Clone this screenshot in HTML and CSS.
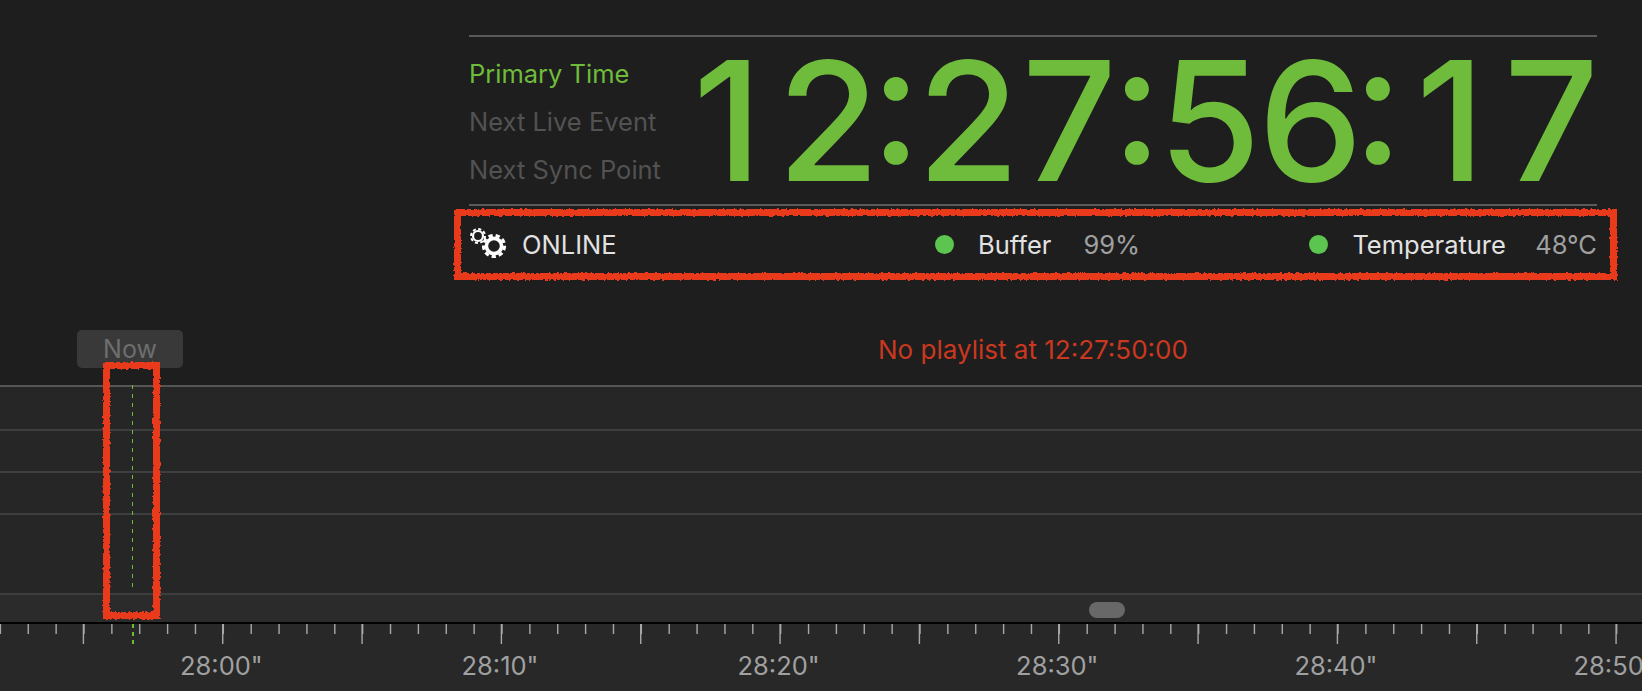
FILE: index.html
```html
<!DOCTYPE html>
<html lang="en">
<head>
<meta charset="utf-8">
<title>Timecode</title>
<link rel="stylesheet" href="styles.css">
</head>
<body>
<svg class="defs" width="0" height="0" aria-hidden="true">
  <filter id="rough" x="-5%" y="-5%" width="110%" height="110%">
    <feTurbulence type="fractalNoise" baseFrequency="0.35" numOctaves="2" seed="4"/>
    <feDisplacementMap in="SourceGraphic" scale="3.5"/>
  </filter>
</svg>
<main class="app">
  <section class="clock">
    <div class="clock-main">
      <ul class="modes">
        <li class="mode mode-active">Primary Time</li>
        <li class="mode">Next Live Event</li>
        <li class="mode">Next Sync Point</li>
      </ul>
      <div class="time"><span class="d">1</span><span class="d">2</span><span class="c">:</span><span class="d">2</span><span class="d">7</span><span class="c">:</span><span class="d">5</span><span class="d">6</span><span class="c">:</span><span class="d">1</span><span class="d">7</span></div>
    </div>
    <div class="status">
      <svg class="gears" width="38" height="38" viewBox="0 0 38 38">
        <circle cx="9" cy="10" r="5" fill="none" stroke="#fff" stroke-width="2.2"/>
        <circle cx="9" cy="10" r="7" fill="none" stroke="#fff" stroke-width="2" stroke-dasharray="3.1 2.4"/>
        <circle cx="25" cy="20" r="10" fill="#1e1e1e"/>
        <circle cx="25" cy="20" r="7.6" fill="none" stroke="#fff" stroke-width="3.6"/>
        <circle cx="25" cy="20" r="10.6" fill="none" stroke="#fff" stroke-width="3" stroke-dasharray="4.3 3.03"/>
      </svg>
      <span class="online">ONLINE</span>
      <span class="dot"></span>
      <span class="stat-name">Buffer</span>
      <span class="stat-value stat-buffer">99%</span>
      <span class="dot"></span>
      <span class="stat-name">Temperature</span>
      <span class="stat-value stat-temp">48°C</span>
    </div>
  </section>
  <div class="nowbar">
    <button class="now" type="button">Now</button>
    <p class="message">No playlist at 12:27:50:00</p>
  </div>
  <section class="timeline">
    <div class="tracks">
      <div class="track track-a"></div>
      <div class="track track-b"></div>
      <div class="track track-b"></div>
      <div class="track track-c"></div>
      <div class="track track-d"><span class="scroll-pill"></span></div>
    </div>
    <div class="ruler">
      <svg class="ticks" width="1642" height="20" viewBox="0 0 1642 20">
        <line class="tick-minor" x1="-0.3" y1="5" x2="1642" y2="5"/>
        <line class="tick-major" x1="82.7" y1="10" x2="1642" y2="10"/>
      </svg>
      <div class="labels">
        <span class="label">28:00"</span>
        <span class="label">28:10"</span>
        <span class="label">28:20"</span>
        <span class="label">28:30"</span>
        <span class="label">28:40"</span>
        <span class="label">28:50"</span>
      </div>
    </div>
    <span class="playhead"></span>
    <span class="playhead-ruler"></span>
  </section>
</main>
<div class="mark mark-status"></div>
<div class="mark mark-playhead"></div>
</body>
</html>
```

FILE: styles.css
```css
* { box-sizing: border-box; }
html, body { margin: 0; height: 100%; }
body {
  position: relative;
  width: 1642px;
  height: 691px;
  overflow: hidden;
  background: #1e1e1e;
  font-family: Inter, "Liberation Sans", sans-serif;
  font-feature-settings: "case";
}
.defs { position: absolute; }
.app { display: flex; flex-direction: column; height: 691px; }

.clock { margin: 35px 45px 0 469px; border-top: 2px solid #5a5a5a; }
.clock-main {
  display: flex;
  justify-content: space-between;
  align-items: flex-start;
  height: 169px;
  border-bottom: 2px solid #5a5a5a;
}
.modes {
  flex: none;
  list-style: none;
  margin: 0;
  padding: 22px 0 0 0;
  display: flex;
  flex-direction: column;
  gap: 19px;
}
.mode { font-size: 25.5px; line-height: 29px; color: #525252; white-space: nowrap; }
.mode-active { color: #6fbb3b; }
.time {
  flex: none;
  display: flex;
  margin-right: 1px;
  font-size: 166px;
  font-weight: 500;
  line-height: 168px;
  color: #6fbb3b;
}
.d, .c { flex: none; text-align: center; }
.d { width: 101px; letter-spacing: -12px; }
.c { width: 39px; letter-spacing: -20px; margin: 0 6.5px 0 -6.5px; }

.status {
  display: flex;
  align-items: center;
  height: 73px;
  padding-top: 4px;
  font-size: 25.5px;
  color: #e2e2e2;
}
.gears { flex: none; margin-right: 15px; }
.online { width: 413px; }
.dot { flex: none; width: 19px; height: 19px; border-radius: 50%; background: #5cc54f; margin-right: 24px; }
.stat-name { color: #e2e2e2; }
.stat-value { color: #a0a0a0; margin-left: 32px; }
.stat-buffer { width: 226px; }
.stat-temp { margin-left: auto; }

.nowbar {
  display: flex;
  align-items: center;
  height: 38px;
  margin-top: 51px;
  padding-left: 77px;
}
.now {
  width: 106px;
  height: 38px;
  padding: 0;
  border: 0;
  border-radius: 5px;
  background: #393939;
  color: #6e6e6e;
  font: 25px Inter, "Liberation Sans", sans-serif;
}
.message { margin: 0 0 0 695px; font-size: 26px; color: #c9381f; white-space: nowrap; }

.timeline { position: relative; flex: 1; margin-top: 17px; background: #282828; }
.tracks { height: 239px; display: flex; flex-direction: column; border-bottom: 2px solid #000; }
.track { border-top: 2px solid #3e3e3e; }
.track-a { height: 44px; border-top-color: #555; background: #262626; }
.track-b { height: 42px; background: #262626; }
.track-c { height: 80px; background: #262626; }
.track-d { position: relative; flex: 1; background: #2b2b2b; }
.scroll-pill {
  position: absolute;
  left: 1089px;
  top: 7px;
  width: 36px;
  height: 16px;
  border-radius: 8px;
  background: #686868;
}

.ruler { position: relative; height: 66px; }
.ticks { display: block; position: absolute; left: 0; top: 0; }
.tick-minor { stroke: #a8a8a8; stroke-width: 10; stroke-dasharray: 1.4 26.467; }
.tick-major { stroke: #a8a8a8; stroke-width: 20; stroke-dasharray: 1.4 137.935; }
.labels { display: flex; padding: 28px 0 0 82px; }
.label { flex: none; width: 278.67px; text-align: center; font-size: 25.5px; line-height: 28px; color: #a0a0a0; white-space: nowrap; }

.playhead, .playhead-ruler { position: absolute; left: 131.5px; }
.playhead {
  top: 0;
  width: 1px;
  height: 204px;
  background: repeating-linear-gradient(#6fbb3b 0 4px, transparent 4px 9px);
}
.playhead-ruler {
  top: 239px;
  width: 2px;
  height: 20px;
  background: repeating-linear-gradient(#6fbb3b 0 4px, transparent 4px 8px);
}

.mark {
  position: absolute;
  border: 7px solid #e93a1e;
  filter: url(#rough);
}
.mark-status { left: 454px; top: 209px; width: 1163px; height: 71px; }
.mark-playhead { left: 103px; top: 362px; width: 57px; height: 257px; }
```
